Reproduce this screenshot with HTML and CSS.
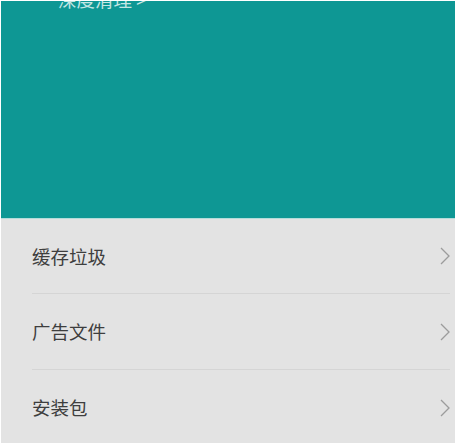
FILE: index.html
```html
<!DOCTYPE html>
<html lang="zh">
<head>
<meta charset="utf-8">
<link rel="stylesheet" href="styles.css">
</head>
<body>
<div class="screen">
  <header class="hero">
    <div class="deep">深度清理<span class="arrow">&gt;</span></div>
  </header>
  <ul class="list">
    <li class="row"><span class="label">缓存垃圾</span><svg class="chev" width="10" height="18" viewBox="0 0 10 18"><polyline points="1,1 9,9 1,17" fill="none" stroke="#9c9c9c" stroke-width="1.3"/></svg></li>
    <li class="row"><span class="label">广告文件</span><svg class="chev" width="10" height="18" viewBox="0 0 10 18"><polyline points="1,1 9,9 1,17" fill="none" stroke="#9c9c9c" stroke-width="1.3"/></svg></li>
    <li class="row"><span class="label">安装包</span><svg class="chev" width="10" height="18" viewBox="0 0 10 18"><polyline points="1,1 9,9 1,17" fill="none" stroke="#9c9c9c" stroke-width="1.3"/></svg></li>
  </ul>
</div>
</body>
</html>
```
FILE: styles.css
```css
html, body {
  margin: 0;
  padding: 0;
  background: #ffffff;
}
body {
  width: 456px;
  height: 443px;
  overflow: hidden;
  font-family: "Noto Sans CJK SC", "Noto Sans", sans-serif;
}
.screen {
  padding: 1px 1px 0 1px;
  height: 442px;
  display: flex;
  flex-direction: column;
}
.hero {
  height: 217px;
  background: #0e9794;
  border-bottom: 1px solid #b4dcda;
  overflow: hidden;
  flex: none;
}
.deep {
  margin-top: -12px;
  padding-left: 57px;
  font-size: 18.5px;
  line-height: 20px;
  color: #c4e6e4;
}
.arrow {
  font-family: "Noto Sans", sans-serif;
  margin-left: 4px;
}
.list {
  list-style: none;
  margin: 0;
  padding: 0;
  background: #e3e3e3;
  flex: 1;
}
.row {
  height: 75px;
  margin-left: 31px;
  margin-right: 5px;
  border-bottom: 1px solid #d5d5d5;
  display: flex;
  align-items: center;
  justify-content: space-between;
}
.row:first-child {
  height: 74px;
}
.row:last-child {
  border-bottom: none;
}
.label {
  font-size: 18.5px;
  color: #3e3e3e;
  margin-top: -1px;
}
.chev {
  display: block;
}
```
